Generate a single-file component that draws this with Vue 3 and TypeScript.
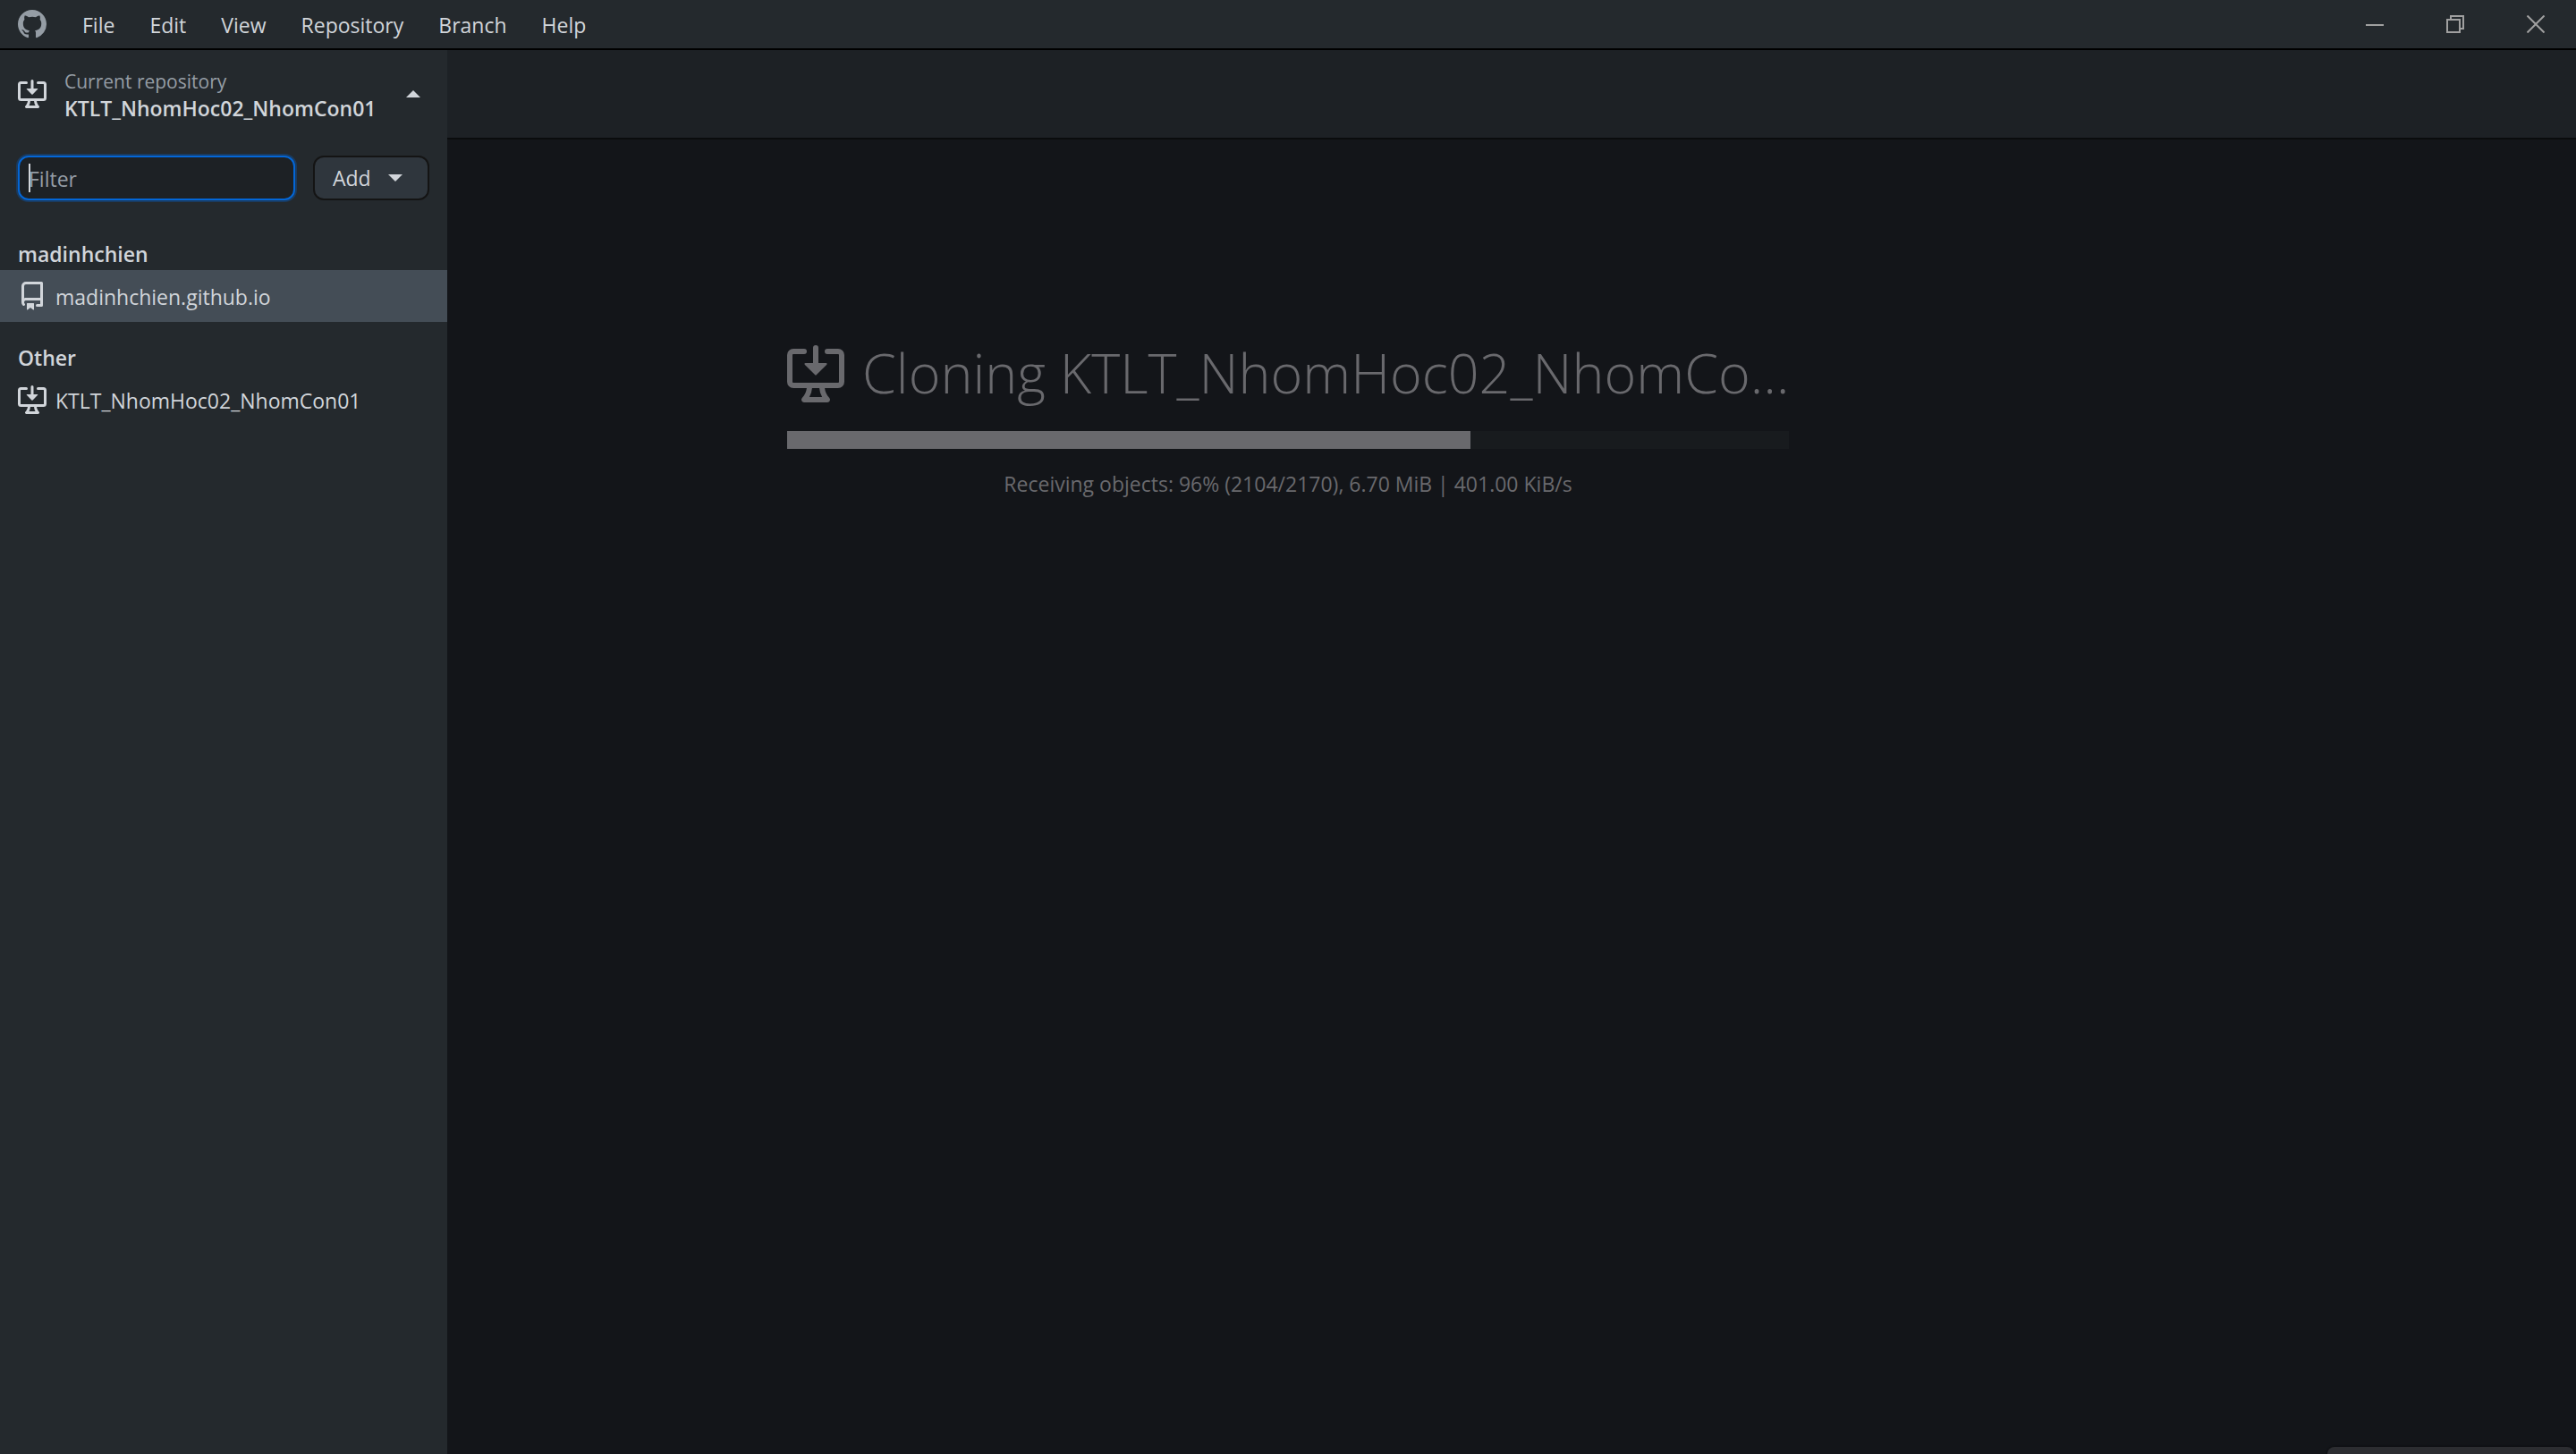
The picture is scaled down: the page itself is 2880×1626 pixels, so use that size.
<script setup lang="ts">
import { ref } from 'vue'

interface Repository {
  name: string
  icon: 'repo' | 'cloning'
  selected: boolean
}

interface RepositoryGroup {
  label: string
  repositories: Repository[]
}

const menus: string[] = ['File', 'Edit', 'View', 'Repository', 'Branch', 'Help']

const groups: RepositoryGroup[] = [
  {
    label: 'madinhchien',
    repositories: [{ name: 'madinhchien.github.io', icon: 'repo', selected: true }],
  },
  {
    label: 'Other',
    repositories: [{ name: 'KTLT_NhomHoc02_NhomCon01', icon: 'cloning', selected: false }],
  },
]

const filter = ref('')
const progress = 68.2

const paths = {
  mark: 'M8 0C3.58 0 0 3.58 0 8c0 3.54 2.29 6.53 5.47 7.59.4.07.55-.17.55-.38 0-.19-.01-.82-.01-1.49-2.01.37-2.53-.49-2.69-.94-.09-.23-.48-.94-.82-1.13-.28-.15-.68-.52-.01-.53.63-.01 1.08.58 1.23.82.72 1.21 1.87.87 2.33.66.07-.52.28-.87.51-1.07-1.78-.2-3.64-.89-3.64-3.95 0-.87.31-1.59.82-2.15-.08-.2-.36-1.02.08-2.12 0 0 .67-.21 2.2.82.64-.18 1.32-.27 2-.27s1.36.09 2 .27c1.53-1.04 2.2-.82 2.2-.82.44 1.1.16 1.92.08 2.12.51.56.82 1.27.82 2.15 0 3.07-1.87 3.75-3.65 3.95.29.25.54.73.54 1.48 0 1.07-.01 1.93-.01 2.2 0 .21.15.46.55.38A8.01 8.01 0 0016 8c0-4.42-3.58-8-8-8z',
  cloning:
    'M4.927 5.427l2.896 2.896a.25.25 0 00.354 0l2.896-2.896A.25.25 0 0010.896 5H8.75V.75a.75.75 0 10-1.5 0V5H5.104a.25.25 0 00-.177.427zM1.573 2.573a.25.25 0 00-.073.177v7.5a.25.25 0 00.25.25h12.5a.25.25 0 00.25-.25v-7.5a.25.25 0 00-.25-.25h-3a.75.75 0 110-1.5h3A1.75 1.75 0 0116 2.75v7.5A1.75 1.75 0 0114.25 12h-3.727c.099 1.041.52 1.872 1.292 2.757A.75.75 0 0111.25 16h-6.5a.75.75 0 01-.565-1.243c.772-.885 1.192-1.716 1.292-2.757H1.75A1.75 1.75 0 010 10.25v-7.5A1.75 1.75 0 011.75 1h3a.75.75 0 010 1.5h-3a.25.25 0 00-.177.073zM6.982 12a5.72 5.72 0 01-.765 2.5h3.566a5.72 5.72 0 01-.765-2.5H6.982z',
  repo: 'M2 2.5A2.5 2.5 0 014.5 0h8.75a.75.75 0 01.75.75v12.5a.75.75 0 01-.75.75h-2.5a.75.75 0 110-1.5h1.75v-2h-8a1 1 0 00-.714 1.7.75.75 0 01-1.072 1.05A2.495 2.495 0 012 11.5v-9zm10.5-1V9h-8c-.356 0-.694.074-1 .208V2.5a1 1 0 011-1h8zM5 12.25v3.25a.25.25 0 00.4.2l1.45-1.087a.25.25 0 01.3 0L8.6 15.7a.25.25 0 00.4-.2v-3.25a.25.25 0 00-.25-.25h-3.5a.25.25 0 00-.25.25z',
}
</script>

<template>
  <div class="window">
    <header class="titlebar">
      <svg class="icon mark" viewBox="0 0 16 16" aria-hidden="true">
        <path fill-rule="evenodd" :d="paths.mark" />
      </svg>
      <nav class="menus" aria-label="Application menu">
        <button v-for="menu in menus" :key="menu" type="button" class="menu">{{ menu }}</button>
      </nav>
      <div class="controls">
        <button type="button" class="control" aria-label="Minimize">
          <svg viewBox="0 0 20 20" aria-hidden="true"><path d="M0 10h20v2H0z" /></svg>
        </button>
        <button type="button" class="control" aria-label="Restore">
          <svg viewBox="0 0 20 20" aria-hidden="true">
            <path fill-rule="evenodd" d="M4 0h16v16h-4v4H0V4h4zM6 2v2h10v10h2V2zM2 6v12h12V6z" />
          </svg>
        </button>
        <button type="button" class="control" aria-label="Close">
          <svg viewBox="0 0 20 20" aria-hidden="true">
            <path class="cross" d="M0.500 0.500l19 19M19.500 0.500l-19 19" />
          </svg>
        </button>
      </div>
    </header>

    <div class="body">
      <div class="page">
        <div class="toolbar"></div>
        <main class="cloning">
          <div class="title">
            <svg class="title-icon" viewBox="0 0 16 16" aria-hidden="true">
              <path fill-rule="evenodd" :d="paths.cloning" />
            </svg>
            <h1>Cloning KTLT_NhomHoc02_NhomCo…</h1>
          </div>
          <div
            class="track"
            role="progressbar"
            aria-label="Clone progress"
            aria-valuemin="0"
            aria-valuemax="100"
            :aria-valuenow="progress"
          >
            <div class="fill" :style="{ width: progress + '%' }"></div>
          </div>
          <p class="status">Receiving objects: 96% (2104/2170), 6.70 MiB | 401.00 KiB/s</p>
        </main>
      </div>

      <aside class="foldout">
        <button type="button" class="current">
          <svg class="icon" viewBox="0 0 16 16" aria-hidden="true">
            <path fill-rule="evenodd" :d="paths.cloning" />
          </svg>
          <span class="current-text">
            <span class="current-label">Current repository</span>
            <span class="current-name">KTLT_NhomHoc02_NhomCon01</span>
          </span>
          <svg class="arrow" viewBox="0 0 16 8" aria-hidden="true"><path d="M0 8l8-8 8 8z" /></svg>
        </button>

        <div class="filter-row">
          <div class="filter-field">
            <input v-model="filter" type="text" class="filter" placeholder="Filter" aria-label="Filter" />
            <span class="caret"></span>
          </div>
          <button type="button" class="add">
            Add
            <svg class="arrow" viewBox="0 0 16 8" aria-hidden="true"><path d="M0 0l8 8 8-8z" /></svg>
          </button>
        </div>

        <section v-for="group in groups" :key="group.label">
          <h2 class="group-label">{{ group.label }}</h2>
          <ul class="list">
            <li v-for="repository in group.repositories" :key="repository.name">
              <button type="button" class="row" :class="{ selected: repository.selected }">
                <svg class="icon" viewBox="0 0 16 16" aria-hidden="true">
                  <path fill-rule="evenodd" :d="paths[repository.icon]" />
                </svg>
                <span class="row-name">{{ repository.name }}</span>
              </button>
            </li>
          </ul>
        </section>
      </aside>
    </div>

    <div class="toast" aria-hidden="true"></div>
  </div>
</template>

<style>
body {
  margin: 0;
  background: #131519;
}
</style>

<style scoped>
.window {
  position: relative;
  display: flex;
  flex-direction: column;
  min-height: 100vh;
  overflow: hidden;
  background: #131519;
  color: #d1d5da;
  font-family: 'Open Sans', 'Noto Sans', sans-serif;
  font-size: 23px;
  line-height: 32px;
}

button {
  margin: 0;
  padding: 0;
  border: 0;
  background: none;
  color: inherit;
  font: inherit;
  text-align: left;
}

svg {
  display: block;
  flex: none;
  fill: currentColor;
}

.icon {
  width: 32px;
  height: 32px;
}

.titlebar {
  display: flex;
  align-items: center;
  height: 54px;
  padding-left: 20px;
  border-bottom: 2px solid #000;
  background: #24292d;
}

.mark {
  color: #959da5;
}

.menus {
  display: flex;
  gap: 1px;
  margin-left: 21px;
}

.menu {
  padding: 2px 19px 0;
}

.controls {
  display: flex;
  align-self: stretch;
  margin-left: auto;
}

.control {
  display: flex;
  align-items: center;
  justify-content: center;
  width: 90px;
  color: #a0a0a0;
}

.control svg {
  width: 20px;
  height: 20px;
}

.cross {
  fill: none;
  stroke: currentColor;
  stroke-width: 2;
}

.body {
  display: grid;
  flex: 1;
  grid-template-columns: 500px 1fr;
}

.page {
  grid-row: 1;
  grid-column: 1 / -1;
}

.foldout {
  grid-row: 1;
  grid-column: 1;
  z-index: 1;
  background: #24292d;
}

.toolbar {
  height: 98px;
  border-bottom: 2px solid #0a0c0d;
  background: #1d2125;
}

.cloning {
  width: 1120px;
  max-width: 100%;
  margin: 0 auto;
  padding-top: 218px;
  color: #69696d;
}

.title {
  display: flex;
  align-items: center;
  gap: 20px;
  height: 88px;
}

.title-icon {
  width: 64px;
  height: 64px;
}

h1 {
  margin: 0;
  padding-bottom: 2px;
  font-size: 61px;
  font-weight: 300;
  line-height: 86px;
  white-space: nowrap;
}

.track {
  height: 20px;
  margin-top: 20px;
  background: #181b1e;
}

.fill {
  height: 100%;
  background: #69696d;
}

.status {
  margin: 23px 0 0;
  text-align: center;
}

.current {
  display: flex;
  align-items: center;
  width: 100%;
  height: 98px;
  padding: 0 30px 0 20px;
}

.current-text {
  display: flex;
  flex: 1;
  flex-direction: column;
  margin-left: 20px;
  padding-top: 2px;
  line-height: 30px;
}

.current-label {
  color: #959da5;
  font-size: 21px;
}

.current-name {
  font-weight: 600;
}

.arrow {
  width: 16px;
  height: 8px;
}

.filter-row {
  display: flex;
  gap: 20px;
  padding: 20px 20px 0;
}

.filter-field {
  position: relative;
  flex: 1;
}

.filter {
  box-sizing: border-box;
  width: 100%;
  height: 50px;
  padding: 2px 10px 0;
  border: 2px solid #0366d6;
  border-radius: 12px;
  outline: 0;
  background: #1d2125;
  box-shadow: 0 0 0 2px rgba(3, 102, 214, 0.3);
  color: inherit;
  font: inherit;
}

.filter::placeholder {
  color: #959da5;
  opacity: 1;
}

.caret {
  position: absolute;
  top: 9px;
  left: 12px;
  width: 2px;
  height: 32px;
  background: #d1d5da;
}

.add {
  display: flex;
  align-items: center;
  justify-content: space-between;
  box-sizing: border-box;
  width: 130px;
  height: 50px;
  padding: 0 28px 0 20px;
  border: 2px solid #141414;
  border-radius: 12px;
  background: #2f363d;
}

.group-label {
  margin: 0;
  padding: 24px 20px 2px;
  font-size: 23px;
  font-weight: 600;
  line-height: 32px;
}

.filter-row + section {
  margin-top: 20px;
}

.list {
  margin: 0;
  padding: 0;
  list-style: none;
}

.row {
  display: flex;
  align-items: center;
  gap: 10px;
  width: 100%;
  height: 58px;
  padding: 0 20px;
}

.row-name {
  padding-top: 2px;
}

.selected {
  background: #444d56;
}

.toast {
  position: absolute;
  right: 2px;
  bottom: 0;
  width: 276px;
  height: 8px;
  border-radius: 8px 8px 0 0;
  background: #2c2d31;
  box-shadow: 0 0 2px 1px rgba(0, 0, 0, 0.4);
}
</style>
